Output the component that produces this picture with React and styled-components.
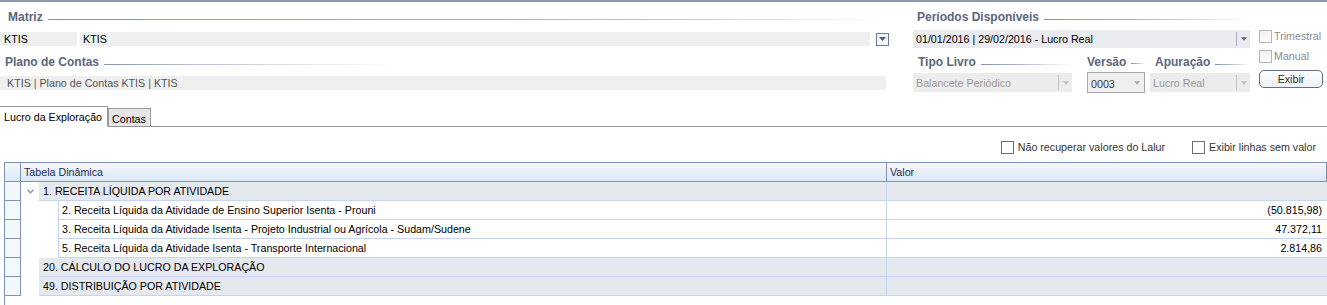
import React from "react";
import styled, { createGlobalStyle } from "styled-components";

const Global = createGlobalStyle`
  html, body { margin: 0; padding: 0; background: #fff; }
  body { font-family: "Liberation Sans", Arial, sans-serif; font-size: 10.7px; color: #000; }
  * { box-sizing: border-box; }
`;

const Page = styled.div`
  width: 1327px;
  height: 305px;
  border-top: 2px solid #8f9aab;
  overflow: hidden;
`;

const Form = styled.div`
  display: flex;
  height: 103px;
`;

const LeftCol = styled.div`
  width: 890px;
  display: flex;
  flex-direction: column;
`;

const Heading = styled.div`
  display: flex;
  align-items: center;
  height: ${(p) => p.$h || 20}px;
  padding-left: ${(p) => p.$pl || 0}px;
  padding-top: ${(p) => p.$pt || 0}px;
`;

const HeadText = styled.span`
  font-weight: bold;
  font-size: 12px;
  color: #5b667a;
  white-space: nowrap;
`;

const HeadLine = styled.span`
  flex: ${(p) => (p.$w ? "none" : 1)};
  width: ${(p) => (p.$w ? `${p.$w}px` : "auto")};
  height: 1px;
  margin: 4px 0 0 5px;
  background: linear-gradient(to right, #8592a8 0%, #b8c0cc ${(p) => p.$fade || 60}%, rgba(255,255,255,0) 100%);
`;

const Row = styled.div`
  display: flex;
  align-items: center;
  margin-top: ${(p) => p.$mt || 0}px;
`;

const Field = styled.div`
  height: ${(p) => p.$h || 14}px;
  width: ${(p) => p.$w}px;
  margin-left: ${(p) => p.$ml || 0}px;
  background: #efefef;
  display: flex;
  align-items: center;
  padding-left: ${(p) => p.$pl || 4}px;
  color: ${(p) => p.$c || "#000"};
  white-space: nowrap;
`;

const SmallDrop = styled.div`
  width: 13px;
  height: 13px;
  border: 1px solid #6b7b96;
  background: #f4f5f7;
  display: flex;
  align-items: center;
  justify-content: center;
  margin-left: 6px;
`;

const Tri = ({ color = "#4f5d75", w = 7 }) => (
  <svg width={w} height="4" viewBox="0 0 7 4">
    <path d="M0 0 H7 L3.5 4 Z" fill={color} />
  </svg>
);

const RightCol = styled.div`
  margin-left: 23px;
  display: flex;
  gap: 9px;
`;

const MainRight = styled.div`
  width: 337px;
  display: flex;
  flex-direction: column;
`;

const Select = styled.div`
  width: ${(p) => p.$w}px;
  height: ${(p) => p.$h || 17}px;
  background: ${(p) => p.$bg || "#e9ebef"};
  border: ${(p) => (p.$border ? "1px solid #a7a7a7" : "none")};
  display: flex;
  align-items: center;
  color: ${(p) => p.$c || "#000"};
  padding-left: 3px;
  white-space: nowrap;
`;

const SelText = styled.span`
  flex: 1;
  padding-top: ${(p) => p.$pt || 0}px;
`;

const SelBtn = styled.div`
  width: ${(p) => p.$w || 14}px;
  align-self: stretch;
  display: flex;
  align-items: center;
  justify-content: center;
  border-left: ${(p) => (p.$sep ? `1px solid ${p.$sep}` : "none")};
  margin: 2px 0;
`;

const Groups = styled.div`
  display: flex;
  margin-top: 1px;
`;

const Group = styled.div`
  display: flex;
  flex-direction: column;
  width: ${(p) => p.$w}px;
  margin-left: ${(p) => p.$ml || 0}px;
`;

const Side = styled.div`
  display: flex;
  flex-direction: column;
  padding-top: 24px;
  width: 65px;
`;

const CheckLabel = styled.label`
  display: flex;
  align-items: center;
  gap: ${(p) => p.$gap || 2}px;
  height: ${(p) => p.$h || 20}px;
  color: ${(p) => p.$c || "#333"};
  white-space: nowrap;
`;

const Box = styled.span`
  width: 13px;
  height: 13px;
  border: 1px solid ${(p) => p.$b || "#b4b4b4"};
  background: ${(p) => p.$bg || "linear-gradient(#f2f2f2, #fcfcfc)"};
  display: inline-block;
  flex-shrink: 0;
`;

const Button = styled.button`
  margin-top: 4px;
  width: 64px;
  height: 18px;
  border: 1px solid #5e6f89;
  border-radius: 5px;
  background: linear-gradient(#fdfdfe, #eef1f5);
  font-family: inherit;
  font-size: 10.7px;
  color: #333;
  padding: 0;
`;

const Tabs = styled.div`
  display: flex;
  align-items: flex-end;
  height: 22px;
  border-bottom: 1px solid #939393;
`;

const Tab = styled.div`
  height: ${(p) => (p.$active ? 21 : 18)}px;
  padding: 0 ${(p) => (p.$active ? 5 : 4)}px 0 ${(p) => (p.$active ? 4 : 3)}px;
  display: flex;
  align-items: center;
  background: ${(p) => (p.$active ? "#fff" : "#e6e6e6")};
  border: 1px solid #999;
  border-left: ${(p) => (p.$active ? "none" : "1px solid #999")};
  border-bottom: ${(p) => (p.$active ? "1px solid #fff" : "none")};
  margin-bottom: ${(p) => (p.$active ? -1 : 0)}px;
  color: #000;
  padding-top: ${(p) => (p.$active ? 0 : 2)}px;
`;

const Options = styled.div`
  display: flex;
  justify-content: flex-end;
  gap: 27px;
  padding: 13px 11px 0 0;
  height: 35px;
`;

const Grid = styled.div`
  margin-left: 4px;
  border-left: 1px solid #7d94b6;
  height: 145px;
`;

const GridRow = styled.div`
  display: grid;
  grid-template-columns: 16px 866px 1fr;
  height: ${(p) => p.$h || 19}px;
`;

const Indicator = styled.div`
  border-right: 1px solid #7d94b6;
  border-bottom: 1px solid #7d94b6;
  border-top: ${(p) => (p.$top ? "1px solid #7d94b6" : "none")};
  background: ${(p) => (p.$head ? "linear-gradient(#f3f7fd, #dfe8f6)" : "#f4f7fc")};
`;

const HeadCell = styled.div`
  border-top: 1px solid #7d94b6;
  border-bottom: 1px solid #7d94b6;
  border-right: 1px solid #7d94b6;
  background: linear-gradient(#f4f8fd, #dce7f6);
  display: flex;
  align-items: center;
  padding-left: 3px;
  color: #1c2f4f;
`;

const NameCell = styled.div`
  display: flex;
  align-items: stretch;
`;

const Indent = styled.div`
  width: ${(p) => p.$w}px;
  display: flex;
  align-items: center;
  justify-content: center;
  background: #fff;
`;

const Label = styled.div`
  flex: 1;
  display: flex;
  align-items: center;
  padding-left: ${(p) => (p.$group ? 4 : 3)}px;
  background: ${(p) => (p.$group ? "#e5e8ec" : "#fff")};
  border-bottom: 1px solid #c3d5f0;
  border-left: ${(p) => (p.$group ? "none" : "1px solid #c3d5f0")};
  border-right: 1px solid #c3d5f0;
  white-space: nowrap;
`;

const ValueCell = styled.div`
  display: flex;
  align-items: center;
  justify-content: flex-end;
  padding-right: 5px;
  background: ${(p) => (p.$group ? "#e5e8ec" : "#fff")};
  border-bottom: 1px solid #c3d5f0;
`;

const Chevron = () => (
  <svg width="7" height="5" viewBox="0 0 7 5">
    <path d="M0.5 0.8 L3.5 3.8 L6.5 0.8" stroke="#8a8f97" strokeWidth="1.3" fill="none" />
  </svg>
);

const rows = [
  { level: 0, text: "1. RECEITA LÍQUIDA POR ATIVIDADE", value: "", expand: true },
  { level: 1, text: "2. Receita Líquida da Atividade de Ensino Superior Isenta - Prouni", value: "(50.815,98)" },
  { level: 1, text: "3. Receita Líquida da Atividade Isenta - Projeto Industrial ou Agrícola - Sudam/Sudene", value: "47.372,11" },
  { level: 1, text: "5. Receita Líquida da Atividade Isenta - Transporte Internacional", value: "2.814,86" },
  { level: 0, text: "20. CÁLCULO DO LUCRO DA EXPLORAÇÃO", value: "" },
  { level: 0, text: "49. DISTRIBUIÇÃO POR ATIVIDADE", value: "" },
];

export default function App() {
  return (
    <Page>
      <Global />
      <Form>
        <LeftCol>
          <Heading $h={28} $pl={8} $pt={2}>
            <HeadText>Matriz</HeadText>
            <HeadLine $fade={70} />
          </Heading>
          <Row $mt={2}>
            <Field $w={77}>KTIS</Field>
            <Field $w={790} $ml={3} $pl={3}>KTIS</Field>
            <SmallDrop>
              <Tri />
            </SmallDrop>
          </Row>
          <Heading $h={30} $pl={5} $pt={2}>
            <HeadText>Plano de Contas</HeadText>
            <HeadLine $fade={30} $w={290} />
          </Heading>
          <Row>
            <Field $w={886} $pl={7} $c="#555">
              KTIS | Plano de Contas KTIS | KTIS
            </Field>
          </Row>
        </LeftCol>
        <RightCol>
          <MainRight>
            <Heading $h={28} $pl={4} $pt={2}>
              <HeadText>Períodos Disponíveis</HeadText>
              <HeadLine $fade={55} />
            </Heading>
            <Select $w={337} $h={18}>
              <SelText>01/01/2016 | 29/02/2016 - Lucro Real</SelText>
              <SelBtn $sep="#a6b3c6" $w={14}>
                <Tri color="#5a6578" w={6} />
              </SelBtn>
            </Select>
            <Groups>
              <Group $w={159}>
                <Heading $h={24} $pl={5} $pt={2}>
                  <HeadText>Tipo Livro</HeadText>
                  <HeadLine $fade={50} />
                </Heading>
                <Select $w={159} $h={19} $bg="#ececec" $c="#9a9a9a">
                  <SelText>Balancete Periódico</SelText>
                  <SelBtn $sep="#c4c4c4" $w={14}>
                    <Tri color="#bcbcbc" w={6} />
                  </SelBtn>
                </Select>
              </Group>
              <Group $w={58} $ml={15}>
                <Heading $h={23} $pl={0} $pt={2}>
                  <HeadText>Versão</HeadText>
                  <HeadLine $fade={50} />
                </Heading>
                <Select $w={58} $h={21} $border $bg="#efefef" $c="#333">
                  <SelText $pt={2}>0003</SelText>
                  <SelBtn $w={14}>
                    <Tri color="#a8a8a8" w={6} />
                  </SelBtn>
                </Select>
              </Group>
              <Group $w={100} $ml={5}>
                <Heading $h={24} $pl={5} $pt={2}>
                  <HeadText>Apuração</HeadText>
                  <HeadLine $fade={50} />
                </Heading>
                <Select $w={100} $h={19} $bg="#ececec" $c="#9a9a9a">
                  <SelText>Lucro Real</SelText>
                  <SelBtn $sep="#c4c4c4" $w={14}>
                    <Tri color="#bcbcbc" w={6} />
                  </SelBtn>
                </Select>
              </Group>
            </Groups>
          </MainRight>
          <Side>
            <CheckLabel $c="#8a8a8a" $gap={2}>
              <Box />
              Trimestral
            </CheckLabel>
            <CheckLabel $c="#8a8a8a" $gap={2}>
              <Box />
              Manual
            </CheckLabel>
            <Button>Exibir</Button>
          </Side>
        </RightCol>
      </Form>
      <Tabs>
        <Tab $active>Lucro da Exploração</Tab>
        <Tab>Contas</Tab>
      </Tabs>
      <Options>
        <CheckLabel $h={14} $gap={4} $c="#333">
          <Box $b="#6f6f6f" $bg="#fff" />
          Não recuperar valores do Lalur
        </CheckLabel>
        <CheckLabel $h={14} $gap={4} $c="#333">
          <Box $b="#6f6f6f" $bg="#fff" />
          Exibir linhas sem valor
        </CheckLabel>
      </Options>
      <Grid>
        <GridRow $h={20}>
          <Indicator $head $top />
          <HeadCell>Tabela Dinâmica</HeadCell>
          <HeadCell>Valor</HeadCell>
        </GridRow>
        {rows.map((r, i) => (
          <GridRow key={i}>
            <Indicator />
            <NameCell>
              <Indent $w={r.level === 1 ? 37 : 18}>{r.expand && <Chevron />}</Indent>
              <Label $group={r.level === 0}>{r.text}</Label>
            </NameCell>
            <ValueCell $group={r.level === 0}>{r.value}</ValueCell>
          </GridRow>
        ))}
      </Grid>
    </Page>
  );
}
